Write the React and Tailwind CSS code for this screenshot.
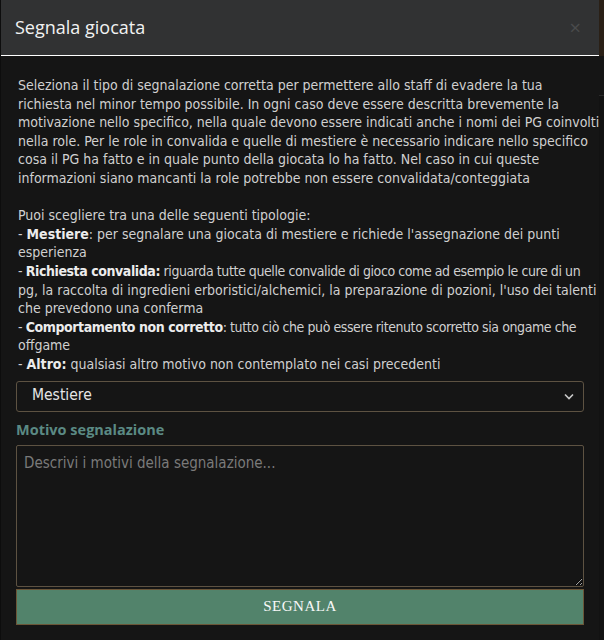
import React from "react";

const body = { fontFamily: '"Liberation Sans Narrow", "DejaVu Sans Condensed", Roboto, sans-serif' };

function L({ children, tight }) {
  return <div className={tight ? "whitespace-nowrap tracking-[-0.42px]" : "whitespace-nowrap"}>{children}</div>;
}

export default function App() {
  return (
    <div className="flex w-[604px] h-[640px] bg-[#1a1a1a] overflow-hidden">
      <div className="w-[599px] shrink-0 flex flex-col bg-[#151515] border-l border-[#0d0d0d]">
        <div className="h-[56px] shrink-0 bg-[#313233] flex items-center justify-between pl-[14px] pr-[18px] border-b border-white">
          <span className="text-[18px] text-[#f2f2f2]" style={{ fontFamily: '"Open Sans", sans-serif' }}>Segnala giocata</span>
          <span className="text-[20px] leading-none text-[#4a4b4c]" style={{ fontFamily: '"Open Sans", sans-serif' }}>×</span>
        </div>
        <div className="flex flex-col px-[15px] pt-[20px]">
          <div className="pl-[2px] text-[14px] leading-[18.6px] text-[#d0d0d0]" style={body}>
            <L>Seleziona il tipo di segnalazione corretta per permettere allo staff di evadere la tua</L>
            <L>richiesta nel minor tempo possibile. In ogni caso deve essere descritta brevemente la</L>
            <L>motivazione nello specifico, nella quale devono essere indicati anche i nomi dei PG coinvolti</L>
            <L>nella role. Per le role in convalida e quelle di mestiere è necessario indicare nello specifico</L>
            <L>cosa il PG ha fatto e in quale punto della giocata lo ha fatto. Nel caso in cui queste</L>
            <L>informazioni siano mancanti la role potrebbe non essere convalidata/conteggiata</L>
            <div className="h-[18.6px]" />
            <L>Puoi scegliere tra una delle seguenti tipologie:</L>
            <L>- <b className="text-[#ececec]">Mestiere</b>: per segnalare una giocata di mestiere e richiede l'assegnazione dei punti</L>
            <L>esperienza</L>
            <L tight>- <b className="text-[#ececec]">Richiesta convalida:</b> riguarda tutte quelle convalide di gioco come ad esempio le cure di un</L>
            <L>pg, la raccolta di ingredieni erboristici/alchemici, la preparazione di pozioni, l'uso dei talenti</L>
            <L>che prevedono una conferma</L>
            <L tight>- <b className="text-[#ececec]">Comportamento non corretto</b>: tutto ciò che può essere ritenuto scorretto sia ongame che</L>
            <L>offgame</L>
            <L>- <b className="text-[#ececec]">Altro:</b> qualsiasi altro motivo non contemplato nei casi precedenti</L>
          </div>
          <div className="mt-[7px] h-[31px] border border-[#5d5242] rounded-[3px] flex items-center justify-between pl-[15px] pr-[9px]">
            <span className="text-[15.5px] text-[#e6e6e6]" style={body}>Mestiere</span>
            <svg width="10" height="7" viewBox="0 0 10 7" fill="none">
              <path d="M1 1.5 L5 5.5 L9 1.5" stroke="#c9c9c9" strokeWidth="1.6" />
            </svg>
          </div>
          <div className="mt-[8px] text-[14.5px] leading-[20px] font-bold text-[#5b8a84]" style={{ fontFamily: '"Open Sans", sans-serif' }}>
            Motivo segnalazione
          </div>
          <textarea
            className="mt-[5px] h-[142px] w-full bg-transparent border border-[#5d5242] rounded-[2px] px-[7px] py-[7px] text-[15px] leading-[20px] text-[#ddd] placeholder:text-[#7a7a7a] outline-none"
            style={body}
            placeholder="Descrivi i motivi della segnalazione..."
          />
          <button
            className="mt-[2px] h-[36px] w-full bg-[#52836b] border border-[#6b5638] text-[15px] tracking-[0.5px] text-[#f8f8f8]"
            style={{ fontFamily: '"Liberation Serif", serif' }}
          >
            SEGNALA
          </button>
        </div>
      </div>
      <div className="flex-1 flex flex-col">
        <div className="h-[56px] bg-[#2a2016]" />
        <div className="h-[40px] bg-[#151515] border-b border-[#2a2a2a]" />
        <div className="flex-1 bg-[#121212]" />
      </div>
    </div>
  );
}
